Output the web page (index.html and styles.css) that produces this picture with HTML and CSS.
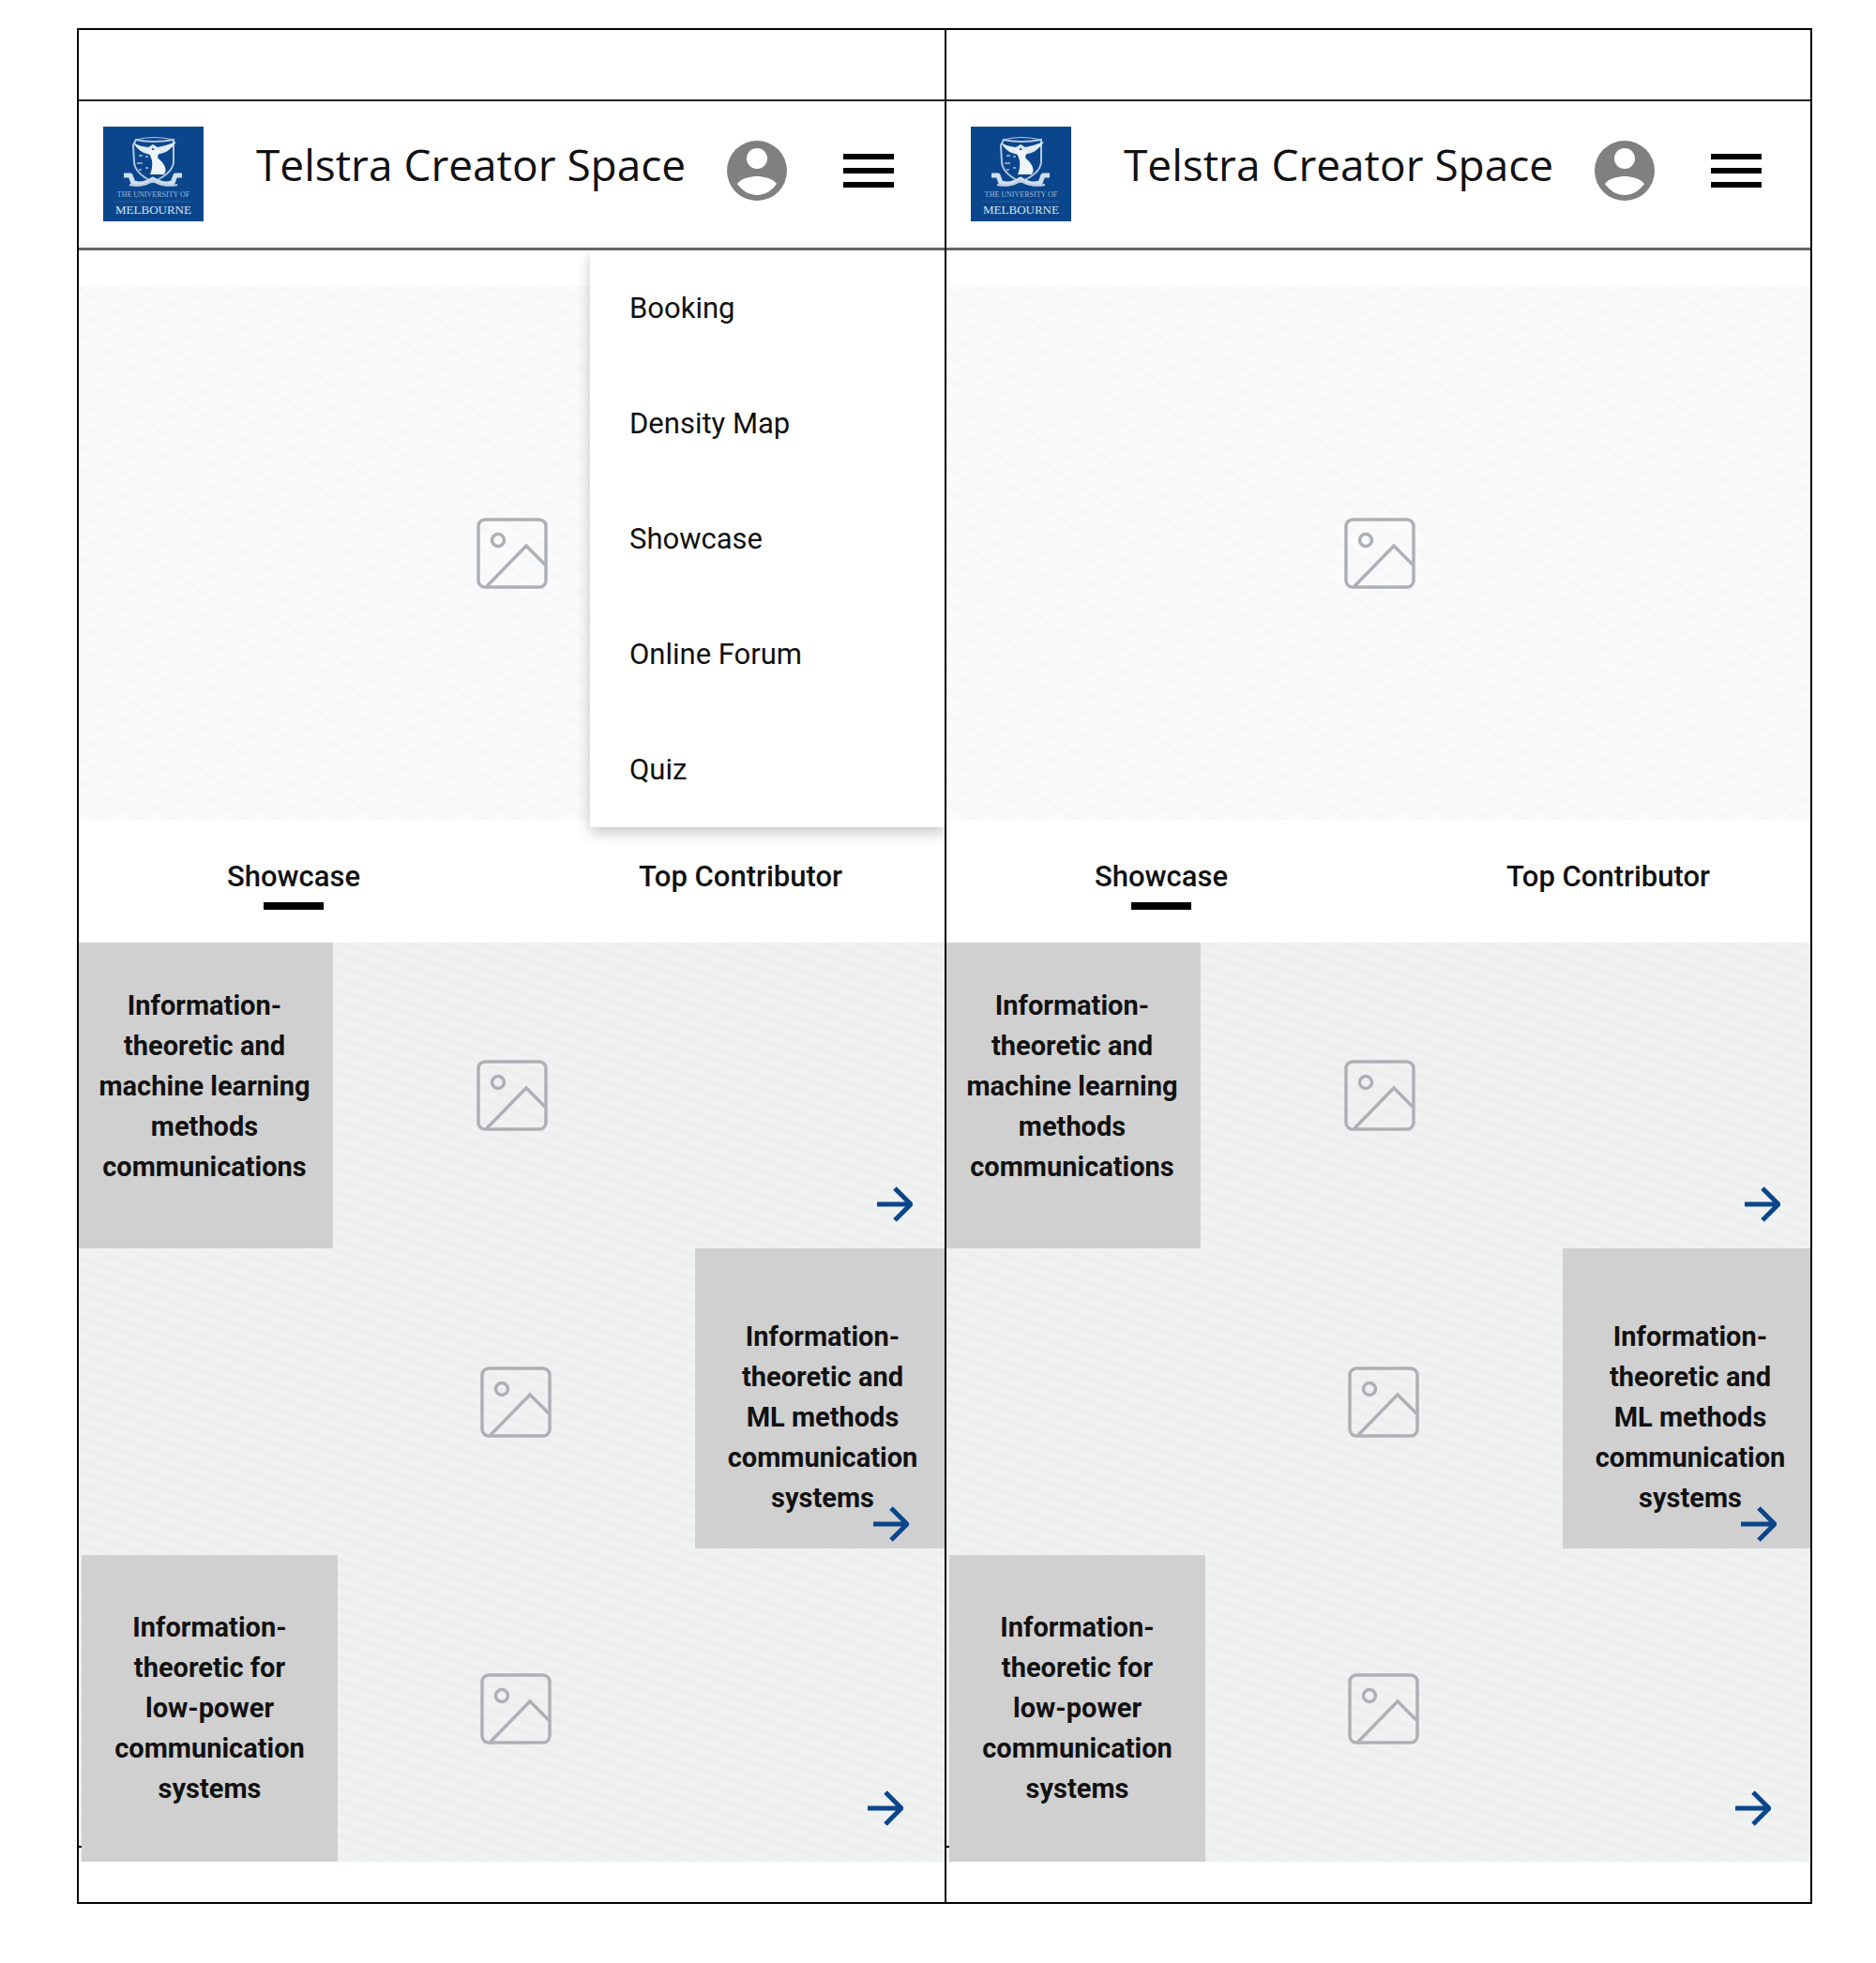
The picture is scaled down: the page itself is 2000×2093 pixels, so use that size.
FILE: index.html
```html
<!DOCTYPE html>
<html lang="en">
<head>
<meta charset="utf-8">
<title>Telstra Creator Space</title>
<link rel="stylesheet" href="styles.css">
</head>
<body>
<svg class="defs" aria-hidden="true">
  <symbol id="crest" viewBox="0 0 107 101">
    <g fill="none" stroke="#b3c8e2" stroke-width="2">
      <path d="M35 14 Q53 18 75 14 L75 38 Q74 50 53 59 Q34 50 33 38 L32 20 Z"/>
      <path d="M35 14 Q53 9 75 14" stroke-width="1"/>
    </g>
    <path d="M32 17 Q38 28 50 30 L53 22 L57 30 Q71 28 78 16 Q68 20 58 22 L53 19 L48 22 Q38 21 32 17Z" fill="#dfebf5"/>
    <path d="M48 25 L60 25 L58 33 L63 38 Q69 46 65 51 L50 51 Q53 44 52 36 Z" fill="#eef6fa"/>
    <path d="M38 31h4M36 39h6M38 46h3M45 32h3M45 44h3" stroke="#7f9fc6" stroke-width="2"/>
    <path d="M22 52 L29 52 L32 60 Q43 63 53 56 Q63 63 74 60 L77 52 L84 52" fill="none" stroke="#cfdfef" stroke-width="5" stroke-linejoin="round"/>
    <path d="M28 62 Q43 65 53 57 Q64 65 79 62" fill="none" stroke="#b9cde4" stroke-width="2"/>
    <path d="M12 80h82" stroke="#2d5f9b" stroke-width="1"/>
  </symbol>
  <symbol id="account" viewBox="0 0 64 64">
    <circle cx="32" cy="32" r="32" fill="#808080"/>
    <circle cx="32" cy="19" r="11" fill="#fff"/>
    <path d="M11 46C15 40 26 38 32 38S49 40 53 46C48 53 41 58 32 58S16 53 11 46Z" fill="#fff"/>
  </symbol>
  <symbol id="bars" viewBox="0 0 54 36">
    <path d="M0 3h54M0 18h54M0 33h54" stroke="#000" stroke-width="6"/>
  </symbol>
  <symbol id="picture" viewBox="0 0 76 76">
    <g fill="none" stroke="#adb0b5" stroke-width="3.5">
      <rect x="2" y="2" width="72" height="72" rx="7"/>
      <circle cx="23" cy="24" r="6.5"/>
      <path d="M11 73 L53 30 L73 50"/>
    </g>
  </symbol>
  <symbol id="arrow" viewBox="0 0 38 38">
    <path d="M0 19h34M19 2l17 17-17 17" fill="none" stroke="#0b468c" stroke-width="5"/>
  </symbol>
</svg>

<main class="frame">
  <section class="screen">
    <div class="status"></div>
    <header class="header">
      <a class="logo" href="#" aria-label="The University of Melbourne">
        <svg class="crest"><use href="#crest"/></svg>
        <span class="logo-small">THE UNIVERSITY OF</span>
        <span class="logo-big">MELBOURNE</span>
      </a>
      <h1 class="title">Telstra Creator Space</h1>
      <button class="icon-button account" aria-label="Account"><svg width="64" height="64"><use href="#account"/></svg></button>
      <button class="icon-button" aria-label="Menu" aria-expanded="true"><svg width="54" height="36"><use href="#bars"/></svg></button>
      <nav class="menu">
        <a href="#">Booking</a>
        <a href="#">Density Map</a>
        <a href="#">Showcase</a>
        <a href="#">Online Forum</a>
        <a href="#">Quiz</a>
      </nav>
    </header>
    <div class="hero"><svg class="picture"><use href="#picture"/></svg></div>
    <nav class="tabs">
      <a class="tab active" href="#">Showcase</a>
      <a class="tab" href="#">Top Contributor</a>
    </nav>
    <div class="list">
      <article class="row first">
        <h2 class="card">Information-<br>theoretic and<br>machine learning<br>methods<br>communications</h2>
        <svg class="picture"><use href="#picture"/></svg>
        <a class="arrow" href="#" aria-label="Open"><svg width="38" height="38"><use href="#arrow"/></svg></a>
      </article>
      <article class="row second">
        <svg class="picture"><use href="#picture"/></svg>
        <h2 class="card">Information-<br>theoretic and<br>ML methods<br>communication<br>systems</h2>
        <a class="arrow" href="#" aria-label="Open"><svg width="38" height="38"><use href="#arrow"/></svg></a>
      </article>
      <article class="row third">
        <h2 class="card">Information-<br>theoretic for<br>low-power<br>communication<br>systems</h2>
        <svg class="picture"><use href="#picture"/></svg>
        <a class="arrow" href="#" aria-label="Open"><svg width="38" height="38"><use href="#arrow"/></svg></a>
      </article>
    </div>
  </section>

  <section class="screen">
    <div class="status"></div>
    <header class="header">
      <a class="logo" href="#" aria-label="The University of Melbourne">
        <svg class="crest"><use href="#crest"/></svg>
        <span class="logo-small">THE UNIVERSITY OF</span>
        <span class="logo-big">MELBOURNE</span>
      </a>
      <h1 class="title">Telstra Creator Space</h1>
      <button class="icon-button account" aria-label="Account"><svg width="64" height="64"><use href="#account"/></svg></button>
      <button class="icon-button" aria-label="Menu" aria-expanded="false"><svg width="54" height="36"><use href="#bars"/></svg></button>
    </header>
    <div class="hero"><svg class="picture"><use href="#picture"/></svg></div>
    <nav class="tabs">
      <a class="tab active" href="#">Showcase</a>
      <a class="tab" href="#">Top Contributor</a>
    </nav>
    <div class="list">
      <article class="row first">
        <h2 class="card">Information-<br>theoretic and<br>machine learning<br>methods<br>communications</h2>
        <svg class="picture"><use href="#picture"/></svg>
        <a class="arrow" href="#" aria-label="Open"><svg width="38" height="38"><use href="#arrow"/></svg></a>
      </article>
      <article class="row second">
        <svg class="picture"><use href="#picture"/></svg>
        <h2 class="card">Information-<br>theoretic and<br>ML methods<br>communication<br>systems</h2>
        <a class="arrow" href="#" aria-label="Open"><svg width="38" height="38"><use href="#arrow"/></svg></a>
      </article>
      <article class="row third">
        <h2 class="card">Information-<br>theoretic for<br>low-power<br>communication<br>systems</h2>
        <svg class="picture"><use href="#picture"/></svg>
        <a class="arrow" href="#" aria-label="Open"><svg width="38" height="38"><use href="#arrow"/></svg></a>
      </article>
    </div>
  </section>
</main>
</body>
</html>
```
FILE: styles.css
```css
* {
  box-sizing: border-box;
}

body {
  margin: 0;
  padding: 30px 68px 63px 82px;
  background: #fff;
  color: #111;
  font-family: Roboto, "Liberation Sans", sans-serif;
  font-size: 31px;
}

a {
  color: inherit;
  text-decoration: none;
}

svg {
  display: block;
}

.defs {
  position: absolute;
  width: 0;
  height: 0;
}

/* Outer outline is laid over both screens */
.frame {
  position: relative;
  display: grid;
  grid-template-columns: 1fr 1fr;
}

.frame::after {
  content: "";
  position: absolute;
  inset: 0;
  border: 2px solid #000;
  pointer-events: none;
}

.screen {
  min-width: 0;
  padding-bottom: 45px;
  border-left: 2px solid #000;
}

.status {
  height: 78px;
  border-bottom: 2px solid #222;
}

.header {
  position: relative;
  display: flex;
  align-items: center;
  height: 159px;
  padding: 0 54px 0 26px;
  border-bottom: 3px solid #666;
}

.logo {
  display: flex;
  flex-direction: column;
  align-items: center;
  width: 107px;
  height: 101px;
  margin-bottom: 2px;
  background: #0b468c;
  color: #d4e2f0;
  font-family: "Liberation Serif", serif;
  white-space: nowrap;
}

.crest {
  width: 107px;
  height: 101px;
  margin-bottom: -34px;
  flex: none;
}

.logo-small {
  color: #9db8d8;
  font-size: 8px;
  line-height: 12px;
}

.logo-big {
  font-size: 13px;
  line-height: 20px;
}

.title {
  flex: 1;
  margin: 0 0 22px 56px;
  font-family: "Open Sans", sans-serif;
  font-size: 46px;
  font-weight: 400;
  line-height: 56px;
  white-space: nowrap;
}

.icon-button {
  flex: none;
  margin: 0 0 8px;
  padding: 0;
  border: 0;
  background: none;
}

.account {
  margin-right: 60px;
}

.menu {
  position: absolute;
  top: 159px;
  right: 0;
  width: 378px;
  background: #fff;
  box-shadow: 0 6px 14px rgba(0, 0, 0, 0.22);
  clip-path: inset(0 0 -30px -30px);
}

.menu a {
  display: block;
  padding-left: 42px;
  line-height: 123px;
}

.hero {
  display: grid;
  place-items: center;
  height: 569px;
  margin-top: 38px;
  background: repeating-linear-gradient(33deg, #fafafb 0 11px, #f6f7f8 15px, #fafafb 20px);
}

.picture {
  width: 76px;
  height: 76px;
}

.tabs {
  display: flex;
  justify-content: space-between;
  height: 131px;
  padding: 41px 109px 0 158px;
  font-weight: 500;
  line-height: 40px;
}

.tab {
  display: flex;
  flex-direction: column;
  align-items: center;
  gap: 7px;
}

.active::after {
  content: "";
  width: 64px;
  height: 8px;
  background: #000;
}

.list {
  background: repeating-linear-gradient(19deg, #f0f1f1 0 6px, #ebeeee 9px, #f0f1f1 12px);
}

.row {
  position: relative;
  display: grid;
  grid-template-columns: 1fr 76px 1fr;
  align-items: center;
  height: 327px;
}

.first {
  height: 326px;
}

.second,
.third {
  padding-left: 8px;
}

.card {
  display: grid;
  place-content: center;
  width: 271px;
  height: 100%;
  margin: 0;
  padding: 0 3px 20px 0;
  background: #d0d0d0;
  font-size: 29px;
  font-weight: 700;
  line-height: 43px;
  text-align: center;
}

.second .picture {
  grid-column: 2;
}

.second .card {
  align-self: start;
  justify-self: end;
  width: 266px;
  height: 320px;
  padding: 40px 0 0 6px;
}

.third .card {
  width: 273px;
  margin-left: -5px;
  padding: 0;
}

.third::before {
  content: "";
  position: absolute;
  left: 0;
  bottom: 15px;
  width: 3px;
  height: 2px;
  background: #000;
}

.arrow {
  position: absolute;
  right: 34px;
  bottom: 28px;
}

.second .arrow {
  right: 38px;
  bottom: 14px;
}

.third .arrow {
  right: 44px;
  bottom: 38px;
}
```
